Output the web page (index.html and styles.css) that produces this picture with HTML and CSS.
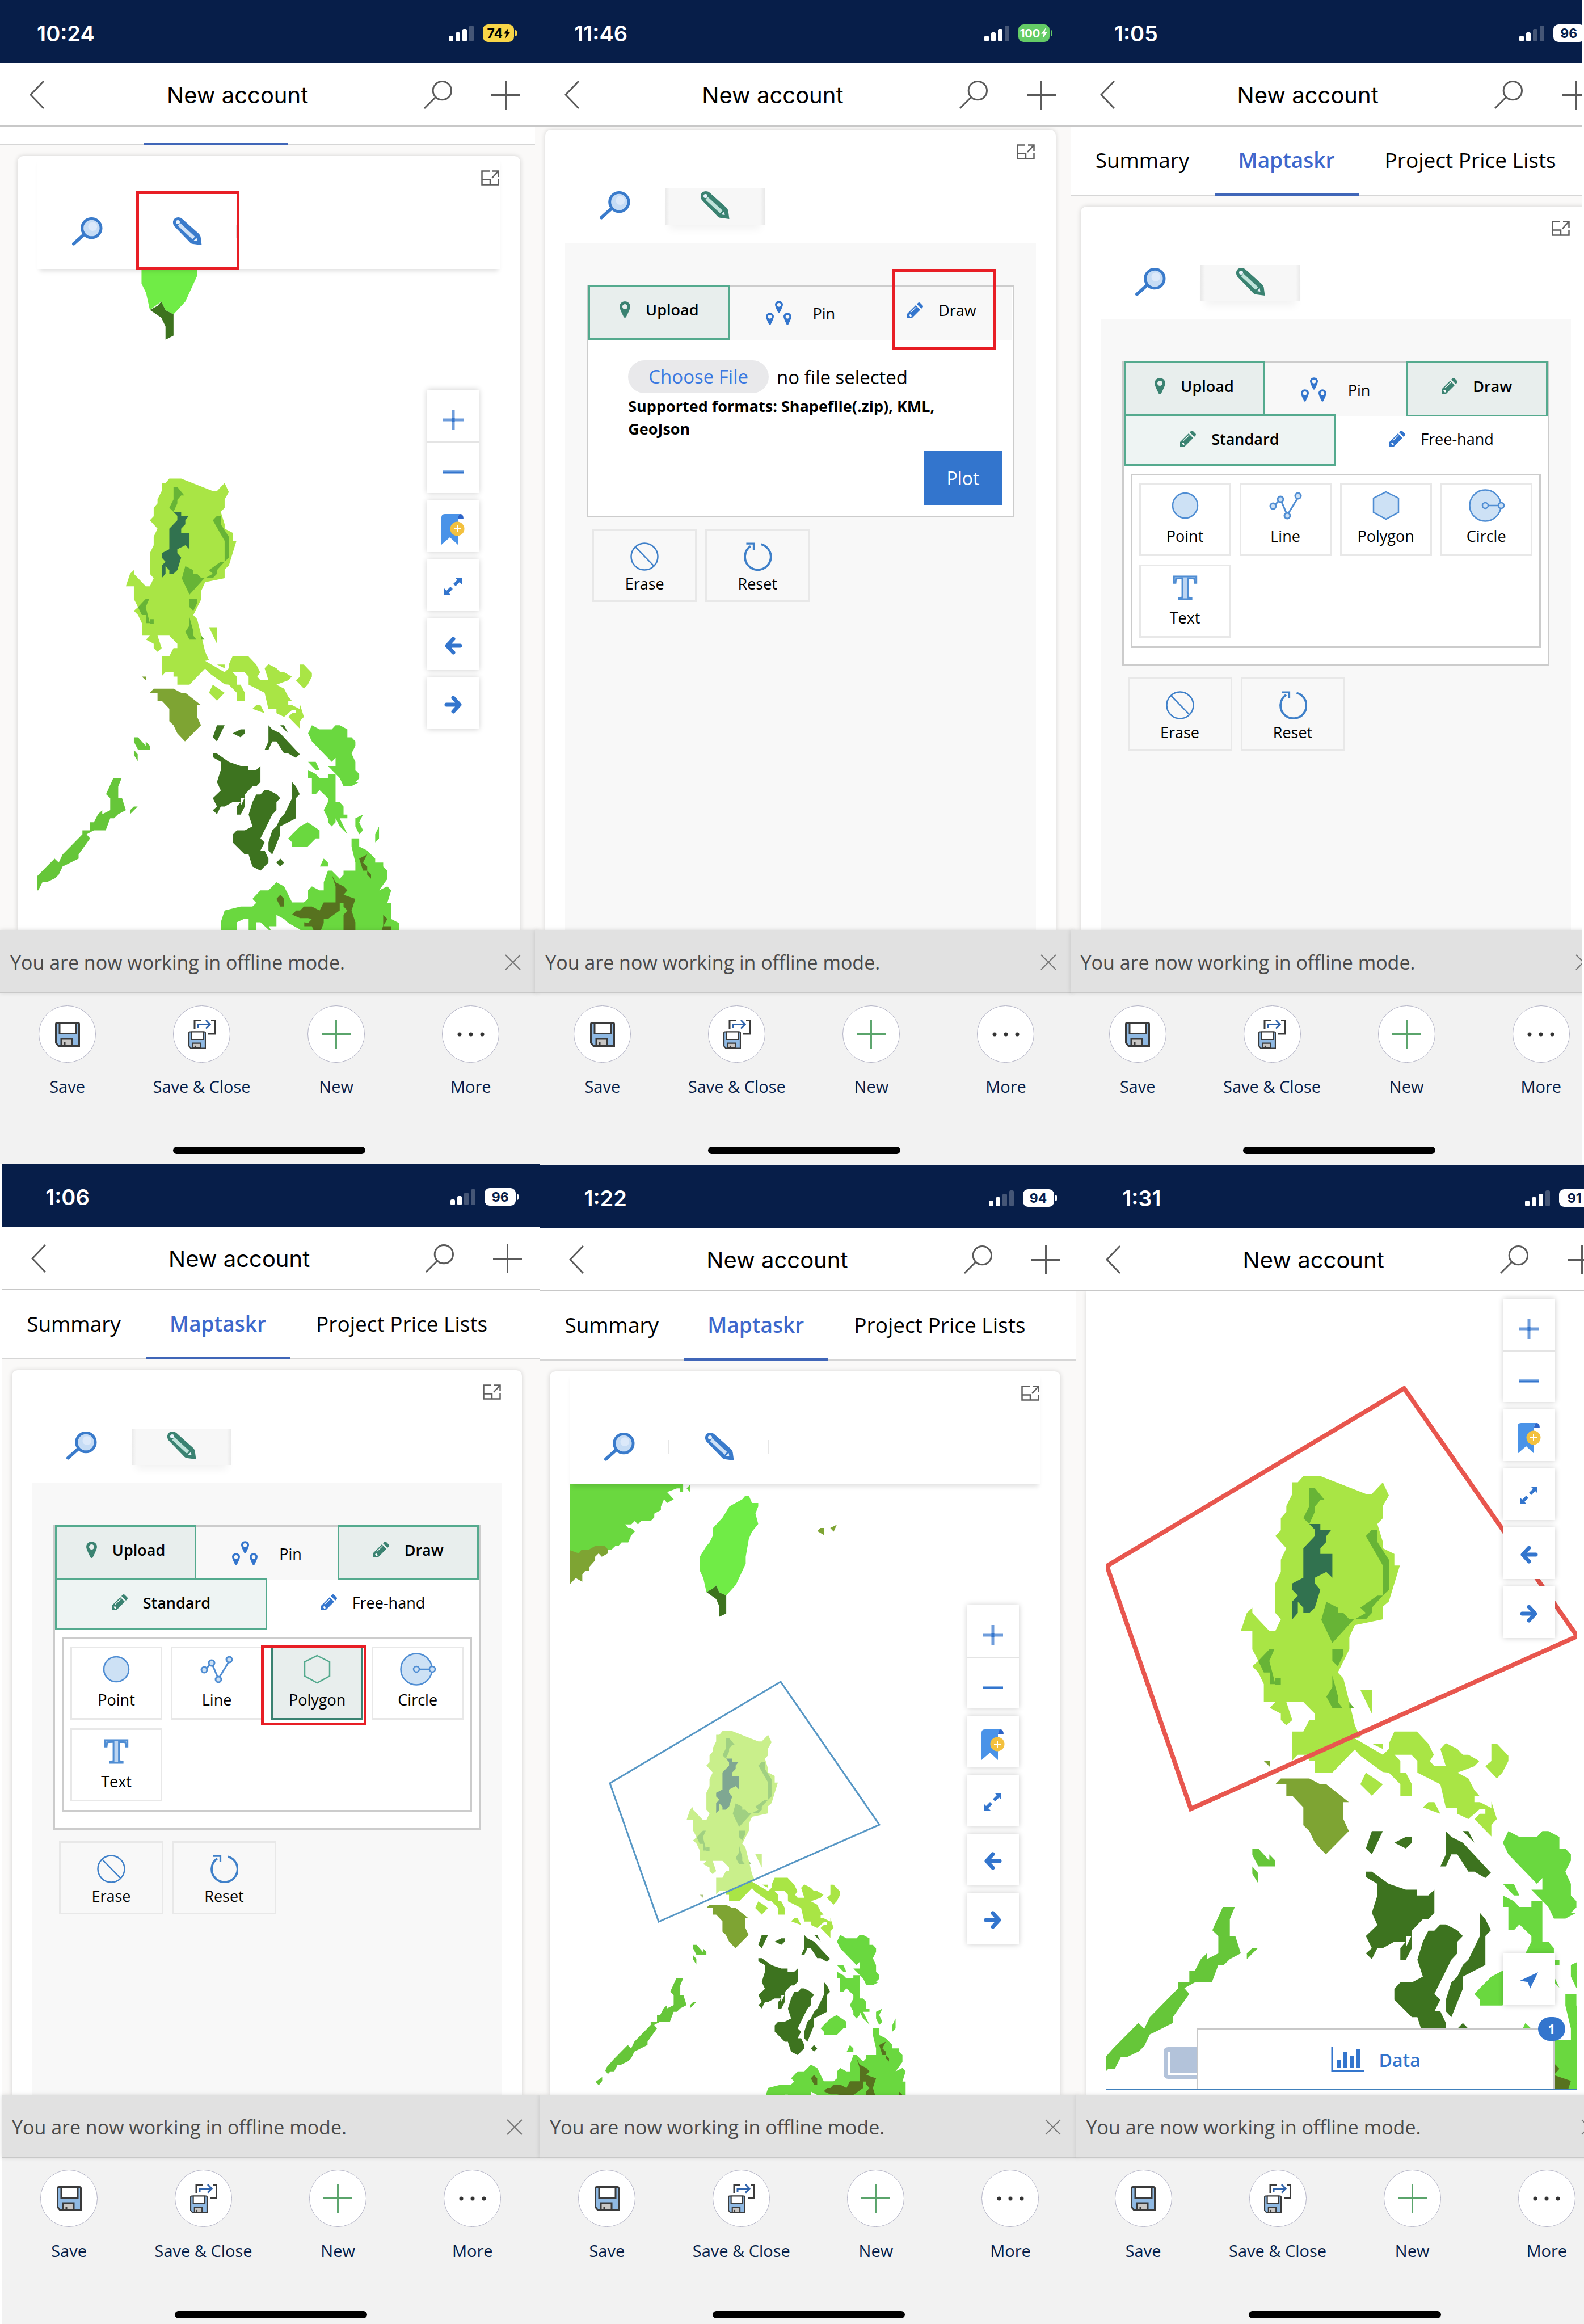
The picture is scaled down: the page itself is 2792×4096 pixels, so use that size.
FILE: index.html
```html
<!DOCTYPE html>
<html lang="en">
<head>
<meta charset="utf-8">
<meta name="viewport" content="width=device-width, initial-scale=1">
<title>Maptaskr offline drawing</title>
<link rel="stylesheet" href="styles.css">
</head>
<body>
<svg class="sprite" aria-hidden="true">
  <defs>
    <symbol id="i-back" viewBox="0 0 26 50"><path d="M25 1 2 25l23 24" fill="none" stroke="#5a5a5a" stroke-width="3"/></symbol>
    <symbol id="i-find" viewBox="0 0 52 52"><circle cx="34" cy="18" r="16.500" fill="none" stroke="#5a5a5a" stroke-width="3"/><path d="M22 30 2 50" stroke="#5a5a5a" stroke-width="3"/></symbol>
    <symbol id="i-add" viewBox="0 0 52 52"><path d="M26 0v52M0 26h52" stroke="#5a5a5a" stroke-width="3"/></symbol>
    <symbol id="i-close" viewBox="0 0 28 28"><path d="M1 1l26 26M27 1 1 27" stroke="#767676" stroke-width="2"/></symbol>
    <symbol id="i-expand" viewBox="0 0 32 27"><path d="M15 1.500H1.500v24h29V16M1.500 16.500H16v9M20 1.500h10.500V12M30 2 19 14" fill="none" stroke="#5f5f5f" stroke-width="2.500"/></symbol>
    <symbol id="i-signal3" viewBox="0 0 44 28"><g fill="#fff"><rect y="18" width="8" height="10" rx="2.500"/><rect x="12" y="12" width="8" height="16" rx="2.500"/><rect x="24" y="6" width="8" height="22" rx="2.500"/><rect x="36" width="8" height="28" rx="2.500" opacity=".25"/></g></symbol>
    <symbol id="i-signal2" viewBox="0 0 44 28"><g fill="#fff"><rect y="18" width="8" height="10" rx="2.500"/><rect x="12" y="12" width="8" height="16" rx="2.500"/><rect x="24" y="6" width="8" height="22" rx="2.500" opacity=".25"/><rect x="36" width="8" height="28" rx="2.500" opacity=".25"/></g></symbol>
    <symbol id="i-bolt" viewBox="0 0 12 20"><path d="M9 0 0 11h5L3 20l9-12H7z" fill="currentColor"/></symbol>
    <symbol id="i-lens" viewBox="0 0 55 50"><path d="M22 30 3 47" stroke="#3a7bcb" stroke-width="6" stroke-linecap="round"/><circle cx="35" cy="19" r="17" fill="#c6dcf5" stroke="#3a7bcb" stroke-width="5"/><circle cx="37" cy="16" r="8" fill="#dce9fa"/></symbol>
    <symbol id="i-pencil" viewBox="0 0 51 50"><path d="M2.500 15.500C-2 9 1 0 10 0q4 0 7 3l29 26q2 2 3 5l2 15-15-2q-3 0-5-2z" fill="currentColor"/><path d="M13 10 39 34l-4 5L9 15z" fill="var(--tint)"/><circle cx="9" cy="8.500" r="3.500" fill="#eaf3fb"/><path d="M42 36l1 6-6-1z" fill="#eaf3fb"/></symbol>
    <symbol id="i-pin" viewBox="0 0 19 29"><path fill-rule="evenodd" d="M9.500 0A9.500 9.500 0 0 1 19 9.500Q19 13 11.500 28q-2 2-4 0Q0 13 0 9.500A9.500 9.500 0 0 1 9.500 0zm0 5a4.500 4.500 0 1 0 0 9 4.500 4.500 0 0 0 0-9z" fill="currentColor"/></symbol>
    <symbol id="i-pins" viewBox="0 0 46 44"><use href="#i-pin" x="16" y="0" width="14" height="22"/><use href="#i-pin" x="0" y="21" width="14" height="22"/><use href="#i-pin" x="31" y="21" width="14" height="22"/></symbol>
    <symbol id="i-pen" viewBox="0 0 28 28"><path d="M0 28v-8L15 5l8 8L8 28zM17 3l2-2q2-2 4 0l4 4q2 2 0 4l-2 2z" fill="currentColor"/><path d="M6 17.500 16 8" stroke="var(--tint)" stroke-width="1.200"/><path d="M3 22l3-1 2 3-2 2z" fill="var(--tint)"/></symbol>
    <symbol id="i-erase" viewBox="0 0 50 50"><circle cx="25" cy="25" r="23.500" fill="none" stroke="#3f80c9" stroke-width="2.500"/><path d="M9 8l33 34" stroke="#3f80c9" stroke-width="2.500"/></symbol>
    <symbol id="i-reset" viewBox="0 0 46 46"><path d="M29 3a21 21 0 1 1-17 3" fill="none" stroke="#3f80c9" stroke-width="3.500"/><path d="M5 2h12v10" fill="none" stroke="#3f80c9" stroke-width="3"/></symbol>
    <symbol id="i-point" viewBox="0 0 64 58"><circle cx="32" cy="29" r="22" fill="#cde1f5" stroke="#4f8dd3" stroke-width="2.500"/></symbol>
    <symbol id="i-line" viewBox="0 0 64 58"><g fill="#cde1f5" stroke="#4f8dd3" stroke-width="3"><path d="M10 31 23 18l12 28L55 13" fill="none"/><circle cx="10" cy="30" r="5"/><circle cx="23" cy="18" r="5"/><circle cx="35" cy="47" r="5"/><circle cx="54" cy="12" r="5"/></g></symbol>
    <symbol id="i-polygon" viewBox="0 0 64 58"><path d="M32 5l22 11v25L32 53 10 41V16z" fill="var(--shape)" stroke="currentColor" stroke-width="2.500"/></symbol>
    <symbol id="i-circle" viewBox="0 0 64 58"><g fill="#cde1f5" stroke="#4f8dd3" stroke-width="2.500"><circle cx="30" cy="29" r="27.500"/><path d="M33 29h22"/><circle cx="30" cy="29" r="5"/><circle cx="58" cy="29" r="5"/></g></symbol>
    <symbol id="i-text" viewBox="0 0 64 58"><text x="32" y="50" text-anchor="middle" font-family="Liberation Serif, serif" font-weight="700" font-size="62" fill="#bcd5f2" stroke="#4f8dd3" stroke-width="3">T</text></symbol>
    <symbol id="i-zoomin" viewBox="0 0 36 36"><path d="M18 0v36M0 18h36" stroke="#3375cd" stroke-width="5" opacity=".7"/><path d="M18 15v6" stroke="#3375cd" stroke-width="5"/></symbol>
    <symbol id="i-zoomout" viewBox="0 0 36 36"><path d="M0 17h36" stroke="#8db6e8" stroke-width="4"/><path d="M0 19h36" stroke="#3375cd" stroke-width="3"/></symbol>
    <symbol id="i-bookmark" viewBox="0 0 41 54"><path d="M6 0h28c-4 2-5 4-5 9v45L15 41 0 54V6q0-6 6-6z" fill="#4a93e8"/><path d="M33 0q6 0 6 9H29q0-7 4-9z" fill="#2d63c8"/><circle cx="28" cy="26" r="12.500" fill="#f3c13f"/><path d="M28 20v12M22 26h12" stroke="#fff" stroke-width="2"/></symbol>
    <symbol id="i-full" viewBox="0 0 32 32"><path d="M19 0h12v12l-4-4-7 7-4-4 7-7zM12 31H0V19l4 4 7-7 4 4-7 7z" fill="#3375cd"/></symbol>
    <symbol id="i-prev" viewBox="0 0 32 32"><path d="M16 4 5 16l11 12M6 16h22" fill="none" stroke="#3375cd" stroke-width="7" stroke-linecap="round" stroke-linejoin="round"/></symbol>
    <symbol id="i-next" viewBox="0 0 32 32"><path d="M16 4l11 12-11 12M26 16H4" fill="none" stroke="#3375cd" stroke-width="7" stroke-linecap="round" stroke-linejoin="round"/></symbol>
    <symbol id="i-locate" viewBox="0 0 30 28"><path d="M30 0 0 14l13 2 4 11z" fill="#3375cd"/></symbol>
    <symbol id="i-chart" viewBox="0 0 58 44"><path d="M2 0v42h56" fill="none" stroke="#3375cd" stroke-width="3"/><path d="M11 22h7v15h-7zM22 8h7v29h-7zM33 15h7v22h-7zM44 4h7v33h-7z" fill="#3375cd"/></symbol>
    <symbol id="i-save" viewBox="0 0 44 44"><path d="M4 1.500h36q2.500 0 2.500 2.500v38.500H6L1.500 37V4Q1.500 1.500 4 1.500z" fill="#8fb9e3" stroke="#3a3a3a" stroke-width="3"/><path d="M8 1.500h29v19H8z" fill="#fff" stroke="#3a3a3a" stroke-width="3"/><path d="M11 42V30h19v12z" fill="#c8c6c4" stroke="#3a3a3a" stroke-width="3"/><path d="M17 36v7" stroke="#3a3a3a" stroke-width="3"/></symbol>
    <symbol id="i-saveclose" viewBox="0 0 48 52"><use href="#i-save" x="0" y="20" width="31" height="32"/><path d="M22 1.500H11V16M40 1.500h6.500V25H35" fill="none" stroke="#3a3a3a" stroke-width="3"/><path d="M17 15V8.500h21" fill="none" stroke="#2f63ab" stroke-width="3"/><path d="M31 1l7 7.500-7 7" fill="none" stroke="#2f63ab" stroke-width="3"/></symbol>
    <symbol id="i-new" viewBox="0 0 52 52"><path d="M26 0v52M0 26h52" stroke="#5aa46b" stroke-width="3"/></symbol>
    <symbol id="i-more" viewBox="0 0 48 48"><g fill="#333"><circle cx="4" cy="24" r="3.500"/><circle cx="24" cy="24" r="3.500"/><circle cx="44" cy="24" r="3.500"/></g></symbol>

    <g id="islands">
      <g fill="#a9e545">
        <path d="M487 289 521 289 612 323 624 323 646 301 658 326 646 346 646 369 635 380 646 414 646 426 669 437 669 459 680 459 658 527 646 537 646 561 590 572 579 595 579 618 556 662 567 673 579 718 590 762 601 785 590 787 646 818 658 807 658 797 669 774 714 774 737 797 748 818 740 830 749 840 772 840 761 807 772 796 795 807 806 818 817 818 839 830 829 840 795 852 817 863 829 885 839 896 829 897 829 908 840 908 863 919 863 907 874 940 863 951 863 973 829 940 840 930 851 930 851 921 840 921 817 940 795 930 795 919 772 919 761 874 715 852 715 830 703 818 669 818 681 830 681 852 692 852 704 874 704 896 681 896 681 874 658 852 646 851 601 820 590 808 545 852 510 852 510 830 499 830 499 818 476 818 465 829 465 774 487 774 499 752 510 752 510 740 487 718 453 718 465 752 453 762 442 752 442 740 420 729 431 718 408 718 408 684 397 662 385 650 397 640 385 618 385 583 362 583 374 549 385 539 385 549 419 583 431 583 442 561 431 549 431 493 442 471 442 448 453 426 431 403 442 392 442 369 453 357 453 346 465 323 465 301 476 301z"/>
        <path d="M601 695h23v45zM624 797h22v10zM612 852l34 22-22 22-23-22zM726 918l11-10h12l12 22zM863 797h11l23 23v10l-12 22-11 11-23-23 12-10z"/>
      </g>
      <g fill="#67b436">
        <path d="M499 312 510 312 530 335 521 335 510 347 510 357 499 380 487 369 499 346zM624 391 635 391 635 414 658 448 658 505 646 516 646 459 612 403zM635 516 646 516 624 539 624 549 612 561 590 561 612 549 601 539zM533 528 556 539 556 549 567 549 579 561 588 561 545 606 523 562zM545 618 567 618 567 629 556 650 545 640zM545 668 556 706 556 718 565 729 545 729 533 708 545 690zM419 618 429 618 419 640 431 684 420 684 420 662 408 662 397 640zM431 673h11v12h-11zM579 718l9 11h-9z"/>
      </g>
      <path fill="#31724f" d="M499 380 521 380 521 391 543 391 533 403 533 414 521 426 521 437 545 437 545 482 533 471 510 482 510 493 521 505 510 539 499 549 487 549 487 539 476 528 476 549 465 561 465 527 476 516 465 505 465 493 487 482 487 426 510 403 510 391z"/>
      <path fill="#7ea433" d="M442 863 499 863 521 874 533 874 578 908 567 908 567 940 578 963 532 1007 510 985 499 963 487 952 487 918 465 896 453 896 453 874 431 874zM408 830h12v11z"/>
      <g fill="#3d731f">
        <path d="M624 963 646 963 624 1007 612 996zM692 974 704 974 704 985 692 996 669 985zM806 963 817 963 829 985zM772 963 783 974 806 985 862 1042 851 1052 829 1040 817 1040 795 1007 783 1007 772 1030 761 1030 772 1007z"/>
        <path d="M612 1040 624 1040 658 1063 692 1074 714 1074 714 1085 737 1085 749 1074 749 1118 737 1130 726 1130 704 1152 704 1185 692 1207 681 1207 681 1185 692 1173 669 1173 646 1185 635 1185 624 1206 612 1195 624 1185 612 1162 635 1141 624 1118 635 1085 635 1063 612 1050z"/>
        <path d="M761 1140 772 1140 795 1151 806 1162 795 1173 795 1195 783 1207 749 1272 761 1283 749 1305 761 1305 772 1327 772 1338 749 1360 726 1349 715 1316 704 1316 669 1283 669 1262 681 1250 704 1250 726 1239 715 1207 726 1173 737 1152 749 1152zM840 1118 851 1130 862 1151 851 1162 851 1217 806 1239 806 1262 783 1316 772 1305 772 1283 783 1250 795 1239 806 1217 817 1207 840 1162zM806 1327 817 1338 806 1349 795 1338z"/>
      </g>
      <path fill="#fff" d="M692 1162h11l-11 22z"/>
      <g fill="#6ad83f">
        <path d="M897 963 919 974 954 974 965 963 977 963 999 974 999 996 1011 996 1022 1007 1022 1019 1011 1040 1022 1063 1022 1085 1033 1096 1033 1108 1022 1118 1033 1118 1011 1129 988 1129 977 1107 943 1074 965 1074 965 1052 954 1063 897 1007 886 985zM886 1085 908 1096 919 1107 943 1107 943 1096 965 1096 965 1173 977 1173 988 1185 988 1207 999 1207 999 1217 977 1217 999 1260 977 1239 965 1217 965 1228 954 1239 943 1228 943 1217 931 1195 943 1173 943 1162 919 1140 908 1151 897 1151 897 1107 886 1107zM886 1063 908 1063 919 1085 908 1085zM885 1228 919 1250 919 1272 908 1272 885 1294 840 1294 840 1283 829 1272 840 1261 863 1239zM1022 1217 1044 1207 1033 1228 1044 1250 1033 1261 1022 1239zM1090 1239 1090 1272 1079 1283 1079 1261zM931 1327 943 1338 943 1349 920 1349z"/>
        <path d="M1011 1272 1033 1272 1033 1294 1056 1305 1079 1327 1079 1338 1102 1338 1102 1349 1114 1360 1114 1383 1090 1414 1114 1403 1125 1414 1114 1448 1125 1448 1125 1492 1147 1503 1147 1530 870 1530 863 1521 829 1503 817 1492 795 1481 795 1512 773 1512 783 1530 778 1530 772 1521 749 1501 737 1501 737 1530 715 1530 715 1491 704 1491 681 1501 681 1530 635 1530 635 1501 646 1469 692 1458 726 1458 737 1448 726 1437 749 1414 772 1414 795 1392 817 1403 840 1447 874 1447 886 1437 886 1414 897 1403 919 1414 931 1414 931 1392 943 1360 954 1360 977 1382 988 1371 988 1360 1022 1360 1022 1338 1011 1294z"/>
      </g>
      <path fill="#57721f" d="M1033 1327 1056 1316 1044 1338 1056 1349 1056 1360 1067 1371 1067 1382 1056 1371 1056 1360 1044 1360zM954 1371 965 1392 988 1403 999 1414 988 1426 1022 1437 1011 1469 1022 1501 1022 1530 988 1530 988 1481 999 1469 988 1458 988 1448 977 1448 977 1469 943 1492 931 1492 931 1503 920 1530 905 1530 897 1512 875 1512 875 1501 886 1503 897 1492 886 1490 863 1490 840 1480 852 1469 863 1469 874 1458 897 1458 919 1469 931 1447 965 1447 965 1403zM806 1426 817 1437 817 1458 806 1458 795 1437zM1102 1481 1114 1492 1102 1512 1125 1512 1125 1530 1095 1530 1102 1510z"/>
      <path fill="#66c639" d="M326 1107 350 1107 340 1130 340 1162 351 1162 362 1195 340 1206 328 1217 317 1217 304 1250 270 1250 249 1261 259 1272 226 1316 226 1327 180 1349 169 1371 158 1381 134 1392 122 1392 110 1414 97 1414 88 1423 79 1412 84 1400 107 1375 157 1327 169 1338 180 1316 237 1261 237 1250 259 1250 259 1228 270 1228 282 1206 294 1195 294 1206 317 1195 317 1162 305 1151zM374 1195 385 1185 396 1185 374 1206zM385 996 397 996 419 1019 419 1007 431 1019 431 1030 397 1030 385 1008zM385 1030 396 1042 396 1061 385 1044zM45 1449 68 1433 68 1446 56 1460z"/>
    </g>
  </defs>
</svg>

<main class="page">
<div class="row row-top">

  <section class="phone">
    <div class="status"><time class="clock">10:24</time><svg class="signal"><use href="#i-signal3"/></svg><span class="battery battery-low">74<svg class="bolt"><use href="#i-bolt"/></svg></span></div>
    <header class="appbar"><button class="ghost" aria-label="Back"><svg class="s-back"><use href="#i-back"/></svg></button><h1>New account</h1><button class="ghost" aria-label="Search"><svg class="s-52"><use href="#i-find"/></svg></button><button class="ghost" aria-label="Add"><svg class="s-52"><use href="#i-add"/></svg></button></header>
    <div class="screen">
      <div class="tabs tabs-scrolled"><span></span><span class="current"></span><span></span></div>
      <div class="card card-inset">
        <button class="ghost expand" aria-label="Expand"><svg class="s-expand"><use href="#i-expand"/></svg></button>
        <div class="tools tools-map"><button class="tool" aria-label="Search map"><svg class="s-tool"><use href="#i-lens"/></svg></button><button class="tool divided" aria-label="Draw"><svg class="s-tool"><use href="#i-pencil"/></svg><span class="mark mark-tool"></span></button></div>
        <div class="map">
          <svg class="land" role="img" aria-label="Map of the Philippines">
            <g transform="translate(-66 -474) scale(.6129 .4301)"><path fill="#70ec46" d="M407 1100 567 1100 567 1130 533 1236 499 1288 476 1271 464 1236 431 1270 420 1200 407 1162z"/><path fill="#3d731f" d="M431 1270 453 1253 464 1236 476 1271 499 1288 499 1375 476 1392 476 1338 464 1302z"/></g>
            <use href="#islands" transform="translate(-66 183) scale(.6129 .6452)"/>
          </svg>
          <div class="controls"><div class="zoom"><button aria-label="Zoom in"><svg><use href="#i-zoomin"/></svg></button><button aria-label="Zoom out"><svg><use href="#i-zoomout"/></svg></button></div><button aria-label="Bookmark"><svg class="s-bookmark"><use href="#i-bookmark"/></svg></button><button aria-label="Full extent"><svg class="s-32"><use href="#i-full"/></svg></button><button aria-label="Previous"><svg class="s-32"><use href="#i-prev"/></svg></button><button aria-label="Next"><svg class="s-32"><use href="#i-next"/></svg></button></div>
        </div>
      </div>
    </div>
    <div class="notice"><p>You are now working in offline mode.</p><button class="ghost" aria-label="Dismiss"><svg class="s-close"><use href="#i-close"/></svg></button></div>
    <footer class="actions"><nav><button><i><svg class="s-save"><use href="#i-save"/></svg></i>Save</button><button><i><svg class="s-sc"><use href="#i-saveclose"/></svg></i>Save &amp; Close</button><button><i><svg class="s-52"><use href="#i-new"/></svg></i>New</button><button><i><svg class="s-sc"><use href="#i-more"/></svg></i>More</button></nav><span class="home"></span></footer>
  </section>

  <section class="phone">
    <div class="status"><time class="clock">11:46</time><svg class="signal"><use href="#i-signal3"/></svg><span class="battery battery-full">100<svg class="bolt"><use href="#i-bolt"/></svg></span></div>
    <header class="appbar"><button class="ghost" aria-label="Back"><svg class="s-back"><use href="#i-back"/></svg></button><h1>New account</h1><button class="ghost" aria-label="Search"><svg class="s-52"><use href="#i-find"/></svg></button><button class="ghost" aria-label="Add"><svg class="s-52"><use href="#i-add"/></svg></button></header>
    <div class="screen">
      <div class="card card-high">
        <button class="ghost expand" aria-label="Expand"><svg class="s-expand"><use href="#i-expand"/></svg></button>
        <div class="tools"><button class="tool" aria-label="Search map"><svg class="s-tool"><use href="#i-lens"/></svg></button><button class="tool pressed" aria-label="Draw"><svg class="s-tool"><use href="#i-pencil"/></svg></button></div>
        <div class="pane">
          <div class="box">
            <div class="modes"><button class="mode on"><svg class="s-pin"><use href="#i-pin"/></svg>Upload</button><button class="mode wide"><svg class="s-pins"><use href="#i-pins"/></svg>Pin</button><button class="mode"><svg class="s-pen"><use href="#i-pen"/></svg>Draw<span class="mark mark-mode"></span></button></div>
            <form class="upload"><div class="file"><input id="shape" type="file" class="hidden-input"><label for="shape">Choose File</label><span>no file selected</span></div><p>Supported formats: Shapefile(.zip), KML, GeoJson</p><button type="button" class="plot">Plot</button></form>
          </div>
          <div class="tiles"><button class="tile big"><svg class="s-erase"><use href="#i-erase"/></svg>Erase</button><button class="tile big"><svg class="s-erase"><use href="#i-reset"/></svg>Reset</button></div>
        </div>
      </div>
    </div>
    <div class="notice"><p>You are now working in offline mode.</p><button class="ghost" aria-label="Dismiss"><svg class="s-close"><use href="#i-close"/></svg></button></div>
    <footer class="actions"><nav><button><i><svg class="s-save"><use href="#i-save"/></svg></i>Save</button><button><i><svg class="s-sc"><use href="#i-saveclose"/></svg></i>Save &amp; Close</button><button><i><svg class="s-52"><use href="#i-new"/></svg></i>New</button><button><i><svg class="s-sc"><use href="#i-more"/></svg></i>More</button></nav><span class="home"></span></footer>
  </section>

  <section class="phone">
    <div class="status"><time class="clock">1:05</time><svg class="signal"><use href="#i-signal2"/></svg><span class="battery">96</span></div>
    <header class="appbar"><button class="ghost" aria-label="Back"><svg class="s-back"><use href="#i-back"/></svg></button><h1>New account</h1><button class="ghost" aria-label="Search"><svg class="s-52"><use href="#i-find"/></svg></button><button class="ghost" aria-label="Add"><svg class="s-52"><use href="#i-add"/></svg></button></header>
    <div class="screen">
      <nav class="tabs"><a href="#summary">Summary</a><a href="#maptaskr" class="current">Maptaskr</a><a href="#prices">Project Price Lists</a></nav>
      <div class="card">
        <button class="ghost expand" aria-label="Expand"><svg class="s-expand"><use href="#i-expand"/></svg></button>
        <div class="tools"><button class="tool" aria-label="Search map"><svg class="s-tool"><use href="#i-lens"/></svg></button><button class="tool pressed" aria-label="Draw"><svg class="s-tool"><use href="#i-pencil"/></svg></button></div>
        <div class="pane">
          <div class="box">
            <div class="modes"><button class="mode on"><svg class="s-pin"><use href="#i-pin"/></svg>Upload</button><button class="mode wide"><svg class="s-pins"><use href="#i-pins"/></svg>Pin</button><button class="mode on"><svg class="s-pen"><use href="#i-pen"/></svg>Draw</button></div>
            <div class="styles"><button class="mode on soft"><svg class="s-pen"><use href="#i-pen"/></svg>Standard</button><button class="mode bare"><svg class="s-pen"><use href="#i-pen"/></svg>Free-hand</button></div>
            <div class="shapes"><button class="tile"><svg class="s-shape"><use href="#i-point"/></svg>Point</button><button class="tile"><svg class="s-shape"><use href="#i-line"/></svg>Line</button><button class="tile"><svg class="s-shape"><use href="#i-polygon"/></svg>Polygon</button><button class="tile"><svg class="s-shape"><use href="#i-circle"/></svg>Circle</button><button class="tile"><svg class="s-shape"><use href="#i-text"/></svg>Text</button></div>
          </div>
          <div class="tiles"><button class="tile big"><svg class="s-erase"><use href="#i-erase"/></svg>Erase</button><button class="tile big"><svg class="s-erase"><use href="#i-reset"/></svg>Reset</button></div>
        </div>
      </div>
    </div>
    <div class="notice"><p>You are now working in offline mode.</p><button class="ghost" aria-label="Dismiss"><svg class="s-close"><use href="#i-close"/></svg></button></div>
    <footer class="actions"><nav><button><i><svg class="s-save"><use href="#i-save"/></svg></i>Save</button><button><i><svg class="s-sc"><use href="#i-saveclose"/></svg></i>Save &amp; Close</button><button><i><svg class="s-52"><use href="#i-new"/></svg></i>New</button><button><i><svg class="s-sc"><use href="#i-more"/></svg></i>More</button></nav><span class="home"></span></footer>
  </section>
</div>

<div class="row row-bottom">

  <section class="phone">
    <div class="status"><time class="clock">1:06</time><svg class="signal"><use href="#i-signal2"/></svg><span class="battery">96</span></div>
    <header class="appbar"><button class="ghost" aria-label="Back"><svg class="s-back"><use href="#i-back"/></svg></button><h1>New account</h1><button class="ghost" aria-label="Search"><svg class="s-52"><use href="#i-find"/></svg></button><button class="ghost" aria-label="Add"><svg class="s-52"><use href="#i-add"/></svg></button></header>
    <div class="screen">
      <nav class="tabs"><a href="#summary">Summary</a><a href="#maptaskr" class="current">Maptaskr</a><a href="#prices">Project Price Lists</a></nav>
      <div class="card">
        <button class="ghost expand" aria-label="Expand"><svg class="s-expand"><use href="#i-expand"/></svg></button>
        <div class="tools"><button class="tool" aria-label="Search map"><svg class="s-tool"><use href="#i-lens"/></svg></button><button class="tool pressed" aria-label="Draw"><svg class="s-tool"><use href="#i-pencil"/></svg></button></div>
        <div class="pane">
          <div class="box">
            <div class="modes"><button class="mode on"><svg class="s-pin"><use href="#i-pin"/></svg>Upload</button><button class="mode wide"><svg class="s-pins"><use href="#i-pins"/></svg>Pin</button><button class="mode on"><svg class="s-pen"><use href="#i-pen"/></svg>Draw</button></div>
            <div class="styles"><button class="mode on soft"><svg class="s-pen"><use href="#i-pen"/></svg>Standard</button><button class="mode bare"><svg class="s-pen"><use href="#i-pen"/></svg>Free-hand</button></div>
            <div class="shapes"><button class="tile"><svg class="s-shape"><use href="#i-point"/></svg>Point</button><button class="tile"><svg class="s-shape"><use href="#i-line"/></svg>Line</button><button class="tile chosen"><svg class="s-shape"><use href="#i-polygon"/></svg>Polygon<span class="mark mark-tile"></span></button><button class="tile"><svg class="s-shape"><use href="#i-circle"/></svg>Circle</button><button class="tile"><svg class="s-shape"><use href="#i-text"/></svg>Text</button></div>
          </div>
          <div class="tiles"><button class="tile big"><svg class="s-erase"><use href="#i-erase"/></svg>Erase</button><button class="tile big"><svg class="s-erase"><use href="#i-reset"/></svg>Reset</button></div>
        </div>
      </div>
    </div>
    <div class="notice"><p>You are now working in offline mode.</p><button class="ghost" aria-label="Dismiss"><svg class="s-close"><use href="#i-close"/></svg></button></div>
    <footer class="actions"><nav><button><i><svg class="s-save"><use href="#i-save"/></svg></i>Save</button><button><i><svg class="s-sc"><use href="#i-saveclose"/></svg></i>Save &amp; Close</button><button><i><svg class="s-52"><use href="#i-new"/></svg></i>New</button><button><i><svg class="s-sc"><use href="#i-more"/></svg></i>More</button></nav><span class="home"></span></footer>
  </section>

  <section class="phone">
    <div class="status"><time class="clock">1:22</time><svg class="signal"><use href="#i-signal2"/></svg><span class="battery">94</span></div>
    <header class="appbar"><button class="ghost" aria-label="Back"><svg class="s-back"><use href="#i-back"/></svg></button><h1>New account</h1><button class="ghost" aria-label="Search"><svg class="s-52"><use href="#i-find"/></svg></button><button class="ghost" aria-label="Add"><svg class="s-52"><use href="#i-add"/></svg></button></header>
    <div class="screen">
      <nav class="tabs"><a href="#summary">Summary</a><a href="#maptaskr" class="current">Maptaskr</a><a href="#prices">Project Price Lists</a></nav>
      <div class="card">
        <button class="ghost expand" aria-label="Expand"><svg class="s-expand"><use href="#i-expand"/></svg></button>
        <div class="tools tools-map"><button class="tool divided" aria-label="Search map"><svg class="s-tool"><use href="#i-lens"/></svg></button><button class="tool divided" aria-label="Draw"><svg class="s-tool"><use href="#i-pencil"/></svg></button></div>
        <div class="map">
          <svg class="land" role="img" aria-label="Map with a drawn polygon">
            <g transform="translate(-61 -575) scale(.6129 .5376)">
              <path fill="#6ad83f" d="M99 1069 426 1069 426 1095 417 1095 417 1083 408 1083 380 1095 399 1119 380 1131 371 1119 362 1143 362 1154 343 1166 343 1178 333 1190 305 1190 296 1201 287 1190 277 1201 259 1201 268 1213 277 1213 287 1225 277 1237 268 1260 249 1260 240 1272 231 1272 220 1284 201 1284 126 1296 99 1290zM436 1083l10-12v24z"/>
              <path fill="#7ea433" d="M99 1285 126 1296 134 1284 155 1284 173 1272 201 1272 210 1284 210 1296 192 1307 183 1296 173 1307 173 1319 155 1342 155 1353 145 1353 136 1365 136 1389 117 1377 99 1399zM812 1223l9-10h10v23zM849 1213l19-11-9 23z"/>
              <path fill="#70ec46" d="M605 1107 615 1107 624 1131 642 1131 642 1142 634 1166 642 1200 624 1225 615 1248 606 1307 606 1330 578 1399 550 1434 530 1424 521 1401 512 1411 493 1423 484 1377 474 1353 474 1307 493 1272 502 1260 512 1237 512 1213 540 1178 559 1142 596 1119z"/>
              <path fill="#3d731f" d="M493 1423 512 1411 521 1401 530 1424 550 1434 550 1493 530 1504 530 1470 521 1446z"/>
            </g>
            <use href="#islands" transform="translate(23 281) scale(.506 .533)"/>
            <path d="M372 348 71 527l86 244 389-171z" fill="#fff" fill-opacity=".38" stroke="#5797c5" stroke-width="3"/>
          </svg>
          <div class="controls"><div class="zoom"><button aria-label="Zoom in"><svg><use href="#i-zoomin"/></svg></button><button aria-label="Zoom out"><svg><use href="#i-zoomout"/></svg></button></div><button aria-label="Bookmark"><svg class="s-bookmark"><use href="#i-bookmark"/></svg></button><button aria-label="Full extent"><svg class="s-32"><use href="#i-full"/></svg></button><button aria-label="Previous"><svg class="s-32"><use href="#i-prev"/></svg></button><button aria-label="Next"><svg class="s-32"><use href="#i-next"/></svg></button></div>
        </div>
      </div>
    </div>
    <div class="notice"><p>You are now working in offline mode.</p><button class="ghost" aria-label="Dismiss"><svg class="s-close"><use href="#i-close"/></svg></button></div>
    <footer class="actions"><nav><button><i><svg class="s-save"><use href="#i-save"/></svg></i>Save</button><button><i><svg class="s-sc"><use href="#i-saveclose"/></svg></i>Save &amp; Close</button><button><i><svg class="s-52"><use href="#i-new"/></svg></i>New</button><button><i><svg class="s-sc"><use href="#i-more"/></svg></i>More</button></nav><span class="home"></span></footer>
  </section>

  <section class="phone">
    <div class="status"><time class="clock">1:31</time><svg class="signal"><use href="#i-signal3"/></svg><span class="battery">91</span></div>
    <header class="appbar"><button class="ghost" aria-label="Back"><svg class="s-back"><use href="#i-back"/></svg></button><h1>New account</h1><button class="ghost" aria-label="Search"><svg class="s-52"><use href="#i-find"/></svg></button><button class="ghost" aria-label="Add"><svg class="s-52"><use href="#i-add"/></svg></button></header>
    <div class="screen">
      <div class="card card-map">
        <div class="map map-lined">
          <svg class="land" role="img" aria-label="Map with a plotted polygon">
            <use href="#islands" transform="translate(-82 57) scale(.8815 .9287)"/>
            <path d="M525 171 1 484l148 428 681-304z" fill="none" stroke="#e8564e" stroke-width="8"/>
          </svg>
          <div class="controls controls-top"><div class="zoom"><button aria-label="Zoom in"><svg><use href="#i-zoomin"/></svg></button><button aria-label="Zoom out"><svg><use href="#i-zoomout"/></svg></button></div><button aria-label="Bookmark"><svg class="s-bookmark"><use href="#i-bookmark"/></svg></button><button aria-label="Full extent"><svg class="s-32"><use href="#i-full"/></svg></button><button aria-label="Previous"><svg class="s-32"><use href="#i-prev"/></svg></button><button aria-label="Next"><svg class="s-32"><use href="#i-next"/></svg></button></div>
          <div class="controls controls-bottom"><button aria-label="Locate"><svg class="s-32"><use href="#i-locate"/></svg></button></div>
          <span class="scale"></span>
          <button class="data"><svg class="s-chart"><use href="#i-chart"/></svg>Data<span class="badge">1</span></button>
        </div>
      </div>
    </div>
    <div class="notice"><p>You are now working in offline mode.</p><button class="ghost" aria-label="Dismiss"><svg class="s-close"><use href="#i-close"/></svg></button></div>
    <footer class="actions"><nav><button><i><svg class="s-save"><use href="#i-save"/></svg></i>Save</button><button><i><svg class="s-sc"><use href="#i-saveclose"/></svg></i>Save &amp; Close</button><button><i><svg class="s-52"><use href="#i-new"/></svg></i>New</button><button><i><svg class="s-sc"><use href="#i-more"/></svg></i>More</button></nav><span class="home"></span></footer>
  </section>
</div>
</main>
</body>
</html>
```

FILE: styles.css
```css
* { box-sizing: border-box; }

body {
  margin: 0;
  background: #fff;
  color: #000;
  font-family: "Open Sans", "Noto Sans", sans-serif;
  overflow: hidden;
}

button {
  margin: 0;
  padding: 0;
  border: 0;
  background: none;
  font: inherit;
  color: inherit;
}

a { color: inherit; text-decoration: none; }
svg { display: block; flex: none; }
.sprite { position: absolute; width: 0; height: 0; }

/* Two rows of phones, each row clipped at the window's right edge */
.page {
  display: grid;
  grid-template-rows: 2051fr 2045fr;
  height: 100vh;
}

.row { display: flex; overflow: hidden; min-height: 0; }
.row-top { margin-right: 3px; background: #f2f2f2; }
.row-bottom { padding-left: 3px; }

.phone {
  flex: 0 0 34%;
  display: flex;
  flex-direction: column;
  min-height: 0;
  background: #faf9f8;
}
.row-top .phone + .phone { margin-left: -5px; }
.row-bottom .phone + .phone { border-top: 2px solid #f2f2f2; }
.row-bottom .phone:last-child { margin-left: -3px; }

/* Status bar */
.status {
  display: flex;
  align-items: center;
  height: 111px;
  flex: none;
  padding: 6px 37px 0 0;
  background: #071e49;
  color: #fff;
  font-family: Inter, "Liberation Sans", sans-serif;
}
.clock {
  width: 25%;
  margin-right: auto;
  padding-left: 4px;
  text-align: center;
  font-size: 38px;
  font-weight: 600;
}
.signal { width: 44px; height: 28px; margin-right: 16px; }
.battery {
  position: relative;
  display: flex;
  align-items: center;
  justify-content: center;
  width: 55px;
  height: 31px;
  margin-right: 5px;
  border-radius: 9px;
  background: #fff;
  color: #071e49;
  font-size: 23px;
  font-weight: 700;
}
.battery::after {
  content: "";
  position: absolute;
  left: 57px;
  width: 3px;
  height: 11px;
  border-radius: 0 4px 4px 0;
  background: #fff;
}
.battery-low { background: #f8d548; color: #000; }
.battery-low::after { background: #f8d548; }
.battery-full { background: #64cc66; color: #fff; font-size: 20px; }
.battery-full::after { background: #64cc66; }
.bolt { width: 11px; height: 19px; margin-left: 2px; }

/* App bar */
.appbar {
  display: flex;
  align-items: center;
  height: 112px;
  flex: none;
  gap: 69px;
  padding: 2px 31px 0 52px;
  border-bottom: 2px solid #c8c8c8;
  background: #fff;
}
.appbar h1 {
  flex: 1;
  margin: 0 -54px;
  padding-left: 13px;
  text-align: center;
  font-family: Inter, "Liberation Sans", sans-serif;
  font-size: 40px;
  font-weight: 400;
}
.s-back { width: 26px; height: 50px; }
.s-52 { width: 51px; height: 51px; }
.s-close { width: 28px; height: 28px; }
.s-expand { width: 32px; height: 27px; }

.screen {
  flex: 1 1 0;
  min-height: 0;
  overflow: hidden;
  display: flex;
  flex-direction: column;
}

/* Form tabs */
.tabs {
  display: flex;
  height: 122px;
  flex: none;
  border-bottom: 2px solid #d6d6d6;
  background: #fff;
  font-size: 37px;
  line-height: 118px;
  white-space: nowrap;
}
.tabs a, .tabs span { min-width: 254px; text-align: center; height: 122px; }
.tabs a:last-child { padding-left: 46px; }
.tabs .current {
  border-bottom: 4px solid #4066b8;
  color: #3e68cc;
  font-weight: 600;
}
.tabs-scrolled { height: 33px; }
.tabs-scrolled span { height: 33px; }

/* Card */
.card {
  position: relative;
  flex: 1;
  min-height: 0;
  display: flex;
  flex-direction: column;
  margin: 19px 31px 0 18px;
  padding: 0 35px;
  border-radius: 10px 10px 0 0;
  background: #fff;
  box-shadow: 0 0 8px rgba(0, 0, 0, .16);
}
.card-inset { margin-left: 31px; }
.card-high { margin-top: 6px; }
.card-map { margin-top: 0; padding-bottom: 8px; border-radius: 0; }
.expand { position: absolute; z-index: 2; top: 25px; right: 37px; }

.tools {
  --tint: #cfe1f6;
  display: flex;
  height: 199px;
  flex: none;
  padding: 103px 0 32px;
  color: #3a7bcb;
}
.tools-map {
  position: relative;
  z-index: 1;
  background: #fff;
  box-shadow: 0 8px 8px -4px rgba(0, 0, 0, .12);
}
.tool {
  position: relative;
  display: flex;
  align-items: center;
  justify-content: center;
  width: 176px;
  height: 64px;
  padding-bottom: 4px;
}
.divided::after {
  content: "";
  position: absolute;
  right: 0;
  width: 2px;
  height: 24px;
  background: #e6e6e6;
}
.pressed {
  --tint: #bfe3da;
  color: #3a8271;
  background: linear-gradient(90deg, #e9e9e9, #f7f7f7 8px, #f7f7f7 calc(100% - 8px), #e9e9e9);
  box-shadow: 0 16px 14px -8px rgba(0, 0, 0, .05);
}
.s-tool { width: 54px; height: 50px; }

/* Callout frames */
.mark { position: absolute; border: 5px solid #e81e25; }
.mark-tool { inset: -41px -4px -33px -2px; }
.mark-mode { inset: -31px 28px -17px 38px; }
.mark-tile { inset: -6px -9px -13px -21px; }

/* Map */
.map { position: relative; flex: 1; min-height: 0; overflow: hidden; }
.map-lined { border-bottom: 2px solid #4080bc; }
.land { width: 100%; height: 100%; }
.controls {
  position: absolute;
  top: 213px;
  right: 38px;
  display: flex;
  flex-direction: column;
  gap: 13px;
}
.controls-top { top: 13px; }
.controls-bottom { top: auto; bottom: 148px; }
.controls button {
  display: flex;
  align-items: center;
  justify-content: center;
  width: 91px;
  height: 91px;
  background: #fff;
}
.controls > button, .zoom { box-shadow: 0 0 10px rgba(0, 0, 0, .2); }
.zoom button { padding-top: 14px; }
.zoom button + button { border-top: 2px solid #e4e4e4; }
.zoom svg { width: 36px; height: 36px; }
.s-32 { width: 32px; height: 32px; margin-top: 4px; }
.s-bookmark { width: 41px; height: 54px; margin-top: 10px; }

.scale {
  position: absolute;
  left: 101px;
  bottom: 18px;
  width: 80px;
  height: 56px;
  border-radius: 8px;
  background: #b3c3da;
}
.scale::before {
  content: "";
  position: absolute;
  inset: 8px 0 7px 8px;
  border: solid #fff;
  border-width: 0 0 3px 3px;
}
.data {
  position: absolute;
  left: 159px;
  right: 38px;
  bottom: 0;
  height: 107px;
  display: flex;
  align-items: center;
  justify-content: center;
  gap: 27px;
  border: 3px solid #c8c8c8;
  border-bottom: 0;
  background: #fff;
  color: #3375cd;
  font-size: 32px;
  font-weight: 600;
}
.s-chart { width: 58px; height: 44px; }
.badge {
  position: absolute;
  top: -23px;
  right: -21px;
  width: 48px;
  height: 42px;
  border-radius: 21px;
  background: #3375cd;
  color: #fff;
  font-size: 23px;
  font-weight: 700;
  line-height: 42px;
  text-align: center;
}

/* Drawing pane */
.pane { flex: 1; padding: 74px 38px 0; background: #f8f8f8; font-size: 27px; }
.box { border: 3px solid #ccc; background: #fff; }
.modes {
  display: grid;
  grid-template-columns: repeat(3, 1fr);
  margin-top: -3px;
}
.mode {
  --tint: #fff;
  position: relative;
  display: flex;
  align-items: center;
  justify-content: center;
  gap: 27px;
  height: 97px;
  padding-bottom: 11px;
  border-top: 3px solid #ccc;
  background: #f8f8f8;
}
.mode svg { color: #3375cd; }
.wide { gap: 37px; padding-bottom: 0; }
.on {
  border: 3px solid #54aa8e;
  background: #e8eeed;
  font-weight: 600;
}
.on svg { color: #3a8271; }
.styles { display: grid; grid-template-columns: 1fr 1fr; margin-top: -4px; }
.styles .mode { height: 91px; padding-bottom: 5px; }
.styles .soft { background: #eef4f3; }
.styles .bare { border: 0; background: none; }
.s-pin { width: 19px; height: 29px; }
.s-pins { width: 46px; height: 44px; }
.s-pen { width: 28px; height: 28px; }

.shapes {
  display: grid;
  grid-template-columns: repeat(4, 1fr);
  gap: 15px;
  margin: 14px 12px 29px;
  padding: 13px 12px 15px;
  border: 3px solid #ccc;
}
.tile {
  --shape: #cde1f5;
  position: relative;
  display: flex;
  flex-direction: column;
  align-items: center;
  height: 129px;
  padding-top: 8px;
  border: 3px solid #e8e8e8;
  line-height: 49px;
}
.tile svg { color: #4f8dd3; }
.chosen { --shape: none; border-color: #3a8271; background: #e8eeed; }
.chosen svg { color: #54aa8e; }
.s-shape { width: 64px; height: 58px; }
.tiles { display: flex; gap: 15px; margin: 20px 10px 0; }
.big { width: 184px; padding-top: 21px; line-height: 46px; }
.s-erase { width: 50px; height: 50px; }

.upload { display: flex; flex-direction: column; padding: 36px 18px 19px 70px; }
.file { display: flex; align-items: center; gap: 14px; font-size: 33px; }
.file label {
  padding: 0 36px;
  border-radius: 30px;
  background: #e9e9eb;
  color: #3b79e1;
  line-height: 58px;
}
.hidden-input { position: absolute; width: 1px; height: 1px; opacity: 0; }
.upload p {
  max-width: 570px;
  margin: 3px 0 18px;
  font-size: 27px;
  font-weight: 700;
  line-height: 40px;
}
.plot {
  align-self: flex-end;
  width: 138px;
  height: 96px;
  background: #3375cd;
  color: #fff;
  font-size: 32px;
}

/* Offline notice and bottom actions */
.notice {
  position: relative;
  z-index: 2;
  display: flex;
  align-items: center;
  justify-content: space-between;
  height: 111px;
  flex: none;
  padding: 5px 30px 0 18px;
  border-bottom: 2px solid #c8c8c8;
  background: #e1e1e1;
  box-shadow: 0 0 8px rgba(0, 0, 0, .12);
  color: #4a4a4a;
  font-size: 34px;
}
.notice p { margin: 0; }

.actions {
  flex: none;
  display: flex;
  flex-direction: column;
  align-items: center;
  padding: 22px 0 17px;
  background: #f2f2f2;
}
.row-bottom .actions { padding: 21px 0 10px; }
.actions nav {
  display: grid;
  grid-template-columns: repeat(4, 1fr);
  width: 100%;
  color: #071e49;
  font-size: 29px;
  line-height: 36px;
}
.actions button {
  display: flex;
  flex-direction: column;
  align-items: center;
  gap: 24px;
}
.actions i {
  display: grid;
  place-items: center;
  width: 101px;
  height: 101px;
  border: 1px solid #b4b4c6;
  border-radius: 50%;
  background: #fff;
}
.s-save { width: 44px; height: 44px; }
.s-sc { width: 48px; height: 52px; }
.home {
  width: 339px;
  height: 13px;
  margin-top: 88px;
  border-radius: 7px;
  background: #000;
}
```
